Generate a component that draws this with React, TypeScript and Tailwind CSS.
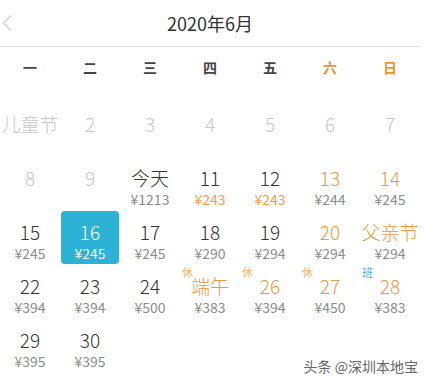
import React from 'react';

type Day = {
  label: string;
  price?: string;
  past?: boolean;
  orange?: boolean;
  orangePrice?: boolean;
  tag?: '休' | '班';
  selected?: boolean;
};

const weekdays = ['一', '二', '三', '四', '五', '六', '日'];

const rows: (Day | null)[][] = [
  [
    { label: '儿童节', past: true },
    { label: '2', past: true },
    { label: '3', past: true },
    { label: '4', past: true },
    { label: '5', past: true },
    { label: '6', past: true },
    { label: '7', past: true },
  ],
  [
    { label: '8', past: true },
    { label: '9', past: true },
    { label: '今天', price: '¥1213' },
    { label: '11', price: '¥243', orangePrice: true },
    { label: '12', price: '¥243', orangePrice: true },
    { label: '13', price: '¥244', orange: true },
    { label: '14', price: '¥245', orange: true },
  ],
  [
    { label: '15', price: '¥245' },
    { label: '16', price: '¥245', selected: true },
    { label: '17', price: '¥245' },
    { label: '18', price: '¥290' },
    { label: '19', price: '¥294' },
    { label: '20', price: '¥294', orange: true },
    { label: '父亲节', price: '¥294', orange: true },
  ],
  [
    { label: '22', price: '¥394' },
    { label: '23', price: '¥394' },
    { label: '24', price: '¥500' },
    { label: '端午', price: '¥383', orange: true, tag: '休' },
    { label: '26', price: '¥394', orange: true, tag: '休' },
    { label: '27', price: '¥450', orange: true, tag: '休' },
    { label: '28', price: '¥383', orange: true, tag: '班' },
  ],
  [
    { label: '29', price: '¥395' },
    { label: '30', price: '¥395' },
    null,
    null,
    null,
    null,
    null,
  ],
];

function DayCell({ day }: { day: Day | null }) {
  if (!day) return <div className="h-[54px]" />;

  let labelColor = 'text-[#333333]';
  if (day.past) labelColor = 'text-[#c8c8c8]';
  else if (day.orange) labelColor = 'text-[#ea9a45]';
  if (day.selected) labelColor = 'text-white';

  let priceColor = day.orangePrice ? 'text-[#f0a04e]' : 'text-[#8c8c8c]';
  if (day.selected) priceColor = 'text-white';

  return (
    <div className="relative h-[54px]">
      <div
        className={
          day.selected
            ? 'mx-[1px] flex h-[53px] flex-col items-center rounded-[4px] bg-[#2cb2d4] pt-[10px]'
            : 'flex h-[53px] flex-col items-center pt-[10px]'
        }
      >
        <span className={`whitespace-nowrap text-[19px] font-light leading-[22px] ${labelColor}`}>
          {day.label}
        </span>
        {day.price && (
          <span className={`mt-[1px] text-[14px] leading-[18px] ${priceColor}`}>{day.price}</span>
        )}
      </div>
      {day.tag && (
        <span
          className={`absolute left-[2px] top-[1px] text-[11px] leading-[12px] ${
            day.tag === '班' ? 'text-[#4aaed0]' : 'text-[#f2b46c]'
          }`}
        >
          {day.tag}
        </span>
      )}
    </div>
  );
}

export default function App() {
  return (
    <div
      className="relative h-[381px] w-[428px] overflow-hidden bg-white"
      style={{ fontFamily: '"Noto Sans CJK SC", "Noto Sans", sans-serif' }}
    >
      <div className="w-[420px]">
        {/* header */}
        <div className="relative flex h-[47px] items-center justify-center border-b border-[#e3e3e3]">
          <svg
            className="absolute left-[1px] top-[14px]"
            width="12"
            height="18"
            viewBox="0 0 12 18"
            fill="none"
          >
            <path d="M10 1.5 L2.5 9 L10 16.5" stroke="#dcdcdc" strokeWidth="2" />
          </svg>
          <span className="text-[18px] leading-none text-[#333333]">2020年6月</span>
        </div>

        {/* weekday labels */}
        <div className="grid grid-cols-7 h-[41px] items-center">
          {weekdays.map((w, i) => (
            <span
              key={w}
              className={`text-center text-[14px] font-semibold ${
                i >= 5 ? 'text-[#e8962f]' : 'text-[#444444]'
              }`}
            >
              {w}
            </span>
          ))}
        </div>

        {/* days */}
        <div className="mt-[15px] flex flex-col">
          {rows.map((row, r) => (
            <div key={r} className="grid grid-cols-7">
              {row.map((d, c) => (
                <DayCell key={c} day={d} />
              ))}
            </div>
          ))}
        </div>
      </div>

      <span className="absolute bottom-[8px] right-[10px] text-[14px] leading-none text-[#666666] [text-shadow:0_0_2px_#ffffff]">
        头条 @深圳本地宝
      </span>
    </div>
  );
}
